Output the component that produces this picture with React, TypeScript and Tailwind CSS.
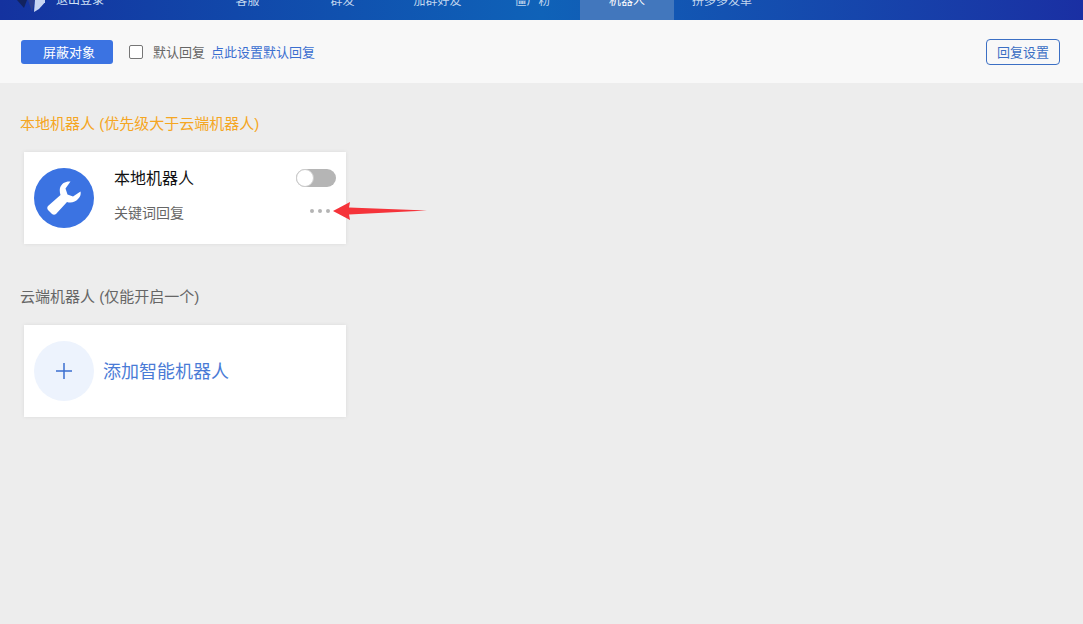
import React from "react";

const font = { fontFamily: '"Liberation Sans", "Noto Sans CJK SC", sans-serif' };

const tabs = [
  { label: "客服", w: "w-[95px]" },
  { label: "群发", w: "w-[95px]" },
  { label: "加群好友", w: "w-[95px]" },
  { label: "僵尸粉", w: "w-[95px]" },
  { label: "机器人", w: "w-[94px]", active: true },
  { label: "拼多多发单", w: "w-[96px]" },
];

function Wrench() {
  return (
    <svg viewBox="0 0 34 34" className="w-[34px] h-[34px]" fill="#fff">
      <path d="M23.500 0.500 C19 0 14.500 2 13 7 C12.500 9.500 12.800 11.500 13.500 14 L1 25 Q-0.500 27 1 29 L5 33 Q7 34.500 9 33 L20 21 C24 22.500 28.500 21 31 18 C33 16 34.200 13.500 33.500 10.500 L26 15.500 L20.500 13.500 L18.500 7.500 Z" />
    </svg>
  );
}

export default function App() {
  return (
    <div className="w-[1083px] h-[624px] overflow-hidden bg-[#ededed] flex flex-col" style={font}>
      <header className="h-5 shrink-0 overflow-hidden flex items-end bg-gradient-to-r from-[#14329f] via-[#0f62b8] to-[#1a2fa3]">
        <div className="flex items-end h-5 w-full">
          <svg viewBox="0 0 30 12" className="w-[30px] h-[12px] ml-[15px] mb-[8px]">
            <path d="M2 0 L12 0 L9 8 Z" fill="#12235f" />
            <path d="M13 0 L20 0 L17 12 Z" fill="#2c3f8f" />
            <path d="M20 0 L32 0 L24 9 L19 12 Z" fill="#c9d6f2" />
          </svg>
          <span className="ml-[11px] mb-[13px] text-[12px] leading-[14px] text-[#cfe0f5]">退出登录</span>
          <nav className="ml-[96px] flex h-5">
            {tabs.map((t) => (
              <div
                key={t.label}
                className={`${t.w} h-5 flex justify-center items-end pb-[12px] text-[12px] leading-[14px] ${
                  t.active ? "bg-[#4277bd] text-white" : "text-[#c4d8ef]"
                }`}
              >
                {t.label}
              </div>
            ))}
          </nav>
        </div>
      </header>

      <div className="h-[63px] shrink-0 bg-[#f8f8f8] flex items-center pl-[21px] pr-[23px]">
        <button className="w-[92px] h-[24px] rounded-[3px] bg-[#3b73e2] text-white text-[13px] flex items-center justify-center mt-[1px] pl-[4px] pt-[2px]">
          屏蔽对象
        </button>
        <span className="ml-[16px] w-[14px] h-[14px] rounded-[2px] border border-[#767676] bg-white" />
        <span className="ml-[10px] text-[13px] text-[#666] mt-[2px]">默认回复</span>
        <span className="ml-[6px] text-[13px] text-[#3b6fd0] mt-[2px]">点此设置默认回复</span>
        <button className="ml-auto w-[74px] h-[26px] rounded-[4px] border border-[#3b6fc4] text-[13px] text-[#3b6fc4] flex items-center justify-center pt-[2px]">
          回复设置
        </button>
      </div>

      <main className="pl-[20px] flex flex-col">
        <h2 className="mt-[31px] text-[15px] leading-[20px] font-normal text-[#f5a623]">本地机器人 (优先级大于云端机器人)</h2>
        <div className="relative mt-[18px] ml-[4px] w-[322px] h-[92px] bg-white shadow-[0_0_4px_rgba(0,0,0,0.08)] flex items-center pl-[10px]">
          <div className="w-[60px] h-[60px] rounded-full bg-[#3b73e2] flex items-center justify-center">
            <Wrench />
          </div>
          <div className="ml-[20px] flex-1 pr-[10px]">
            <div className="flex items-center justify-between h-[24px] -mt-[6px]">
              <span className="text-[16px] text-[#111]">本地机器人</span>
              <span className="relative w-[40px] h-[18px] rounded-full bg-[#b5b5b5] -mt-[1px]">
                <span className="absolute left-0 top-0 w-[18px] h-[18px] rounded-full bg-white border border-[#ccc]" />
              </span>
            </div>
            <div className="flex items-center justify-between mt-[13px] h-[20px]">
              <span className="text-[14px] text-[#666]">关键词回复</span>
              <span className="flex gap-[4px] pr-[6px] -mt-[5px]">
                <span className="w-[4px] h-[4px] rounded-full bg-[#b4b4b4]" />
                <span className="w-[4px] h-[4px] rounded-full bg-[#b4b4b4]" />
                <span className="w-[4px] h-[4px] rounded-full bg-[#b4b4b4]" />
              </span>
            </div>
          </div>
          <svg viewBox="0 0 94 18" className="absolute left-[309px] top-[50px] w-[94px] h-[18px]">
            <path d="M0 9 L17 0 L16 5.500 L94 8.500 L16 12.500 L17 18 Z" fill="#f5333a" />
          </svg>
        </div>

        <h2 className="mt-[43px] text-[15px] leading-[20px] font-normal text-[#666]">云端机器人 (仅能开启一个)</h2>
        <div className="mt-[18px] ml-[4px] w-[322px] h-[92px] bg-white shadow-[0_0_4px_rgba(0,0,0,0.08)] flex items-center pl-[10px]">
          <div className="w-[60px] h-[60px] rounded-full bg-[#edf3fd] flex items-center justify-center">
            <svg viewBox="0 0 16 16" className="w-[16px] h-[16px]" fill="none" stroke="#3b6fd0" strokeWidth="1.500">
              <path d="M8 0 V16 M0 8 H16" />
            </svg>
          </div>
          <span className="ml-[9px] text-[18px] text-[#4a7bd6] pt-[2px]">添加智能机器人</span>
        </div>
      </main>
    </div>
  );
}
